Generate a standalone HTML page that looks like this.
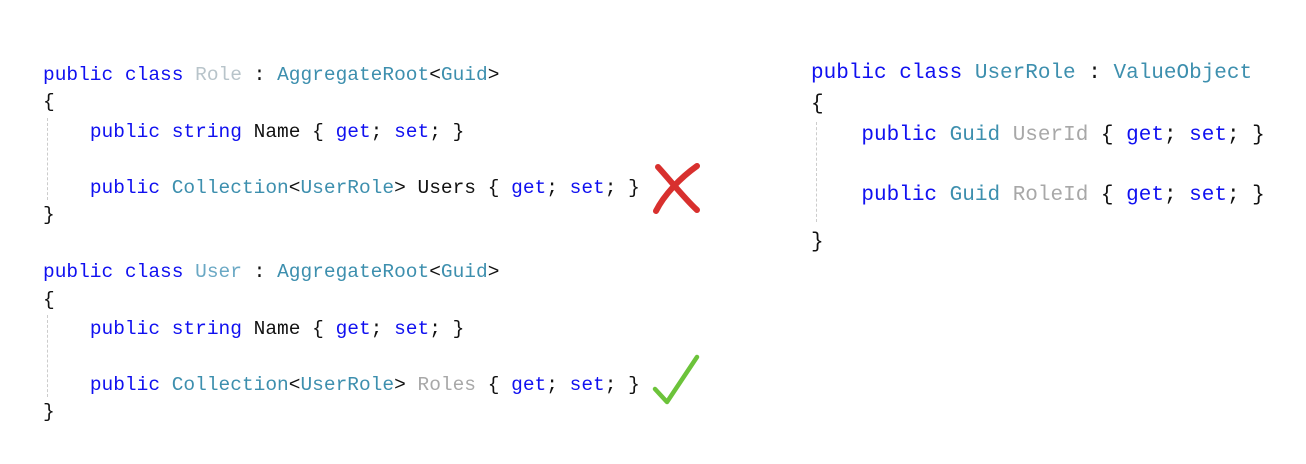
<!DOCTYPE html>
<html><head><meta charset="utf-8"><style>
html,body{margin:0;padding:0;background:#fff;width:1306px;height:464px;overflow:hidden;position:relative}
.l{position:absolute;white-space:pre;font-family:"Liberation Mono",monospace;font-size:19.5px;line-height:24px;color:#111}
.r{font-size:21px}
.k{color:#1010f0}.t{color:#3d8fae}.g{color:#a8a8a8}
.guide{position:absolute;width:0;border-left:1px dashed #ccc}
</style></head><body>
<div class="l" style="left:43px;top:63px"><span class="k">public class</span> <span class="g" style="color:#b8c4ca">Role</span> : <span class="t">AggregateRoot</span>&lt;<span class="t">Guid</span>&gt;</div>
<div class="l" style="left:43px;top:90px">{</div>
<div class="l" style="left:43px;top:120px">    <span class="k">public string</span> Name { <span class="k">get</span>; <span class="k">set</span>; }</div>
<div class="l" style="left:43px;top:176px">    <span class="k">public</span> <span class="t">Collection</span>&lt;<span class="t">UserRole</span>&gt; Users { <span class="k">get</span>; <span class="k">set</span>; }</div>
<div class="l" style="left:43px;top:203px">}</div>
<div class="guide" style="left:47px;top:118px;height:82px"></div>

<div class="l" style="left:43px;top:260px"><span class="k">public class</span> <span class="t" style="color:#6aa8c4">User</span> : <span class="t">AggregateRoot</span>&lt;<span class="t">Guid</span>&gt;</div>
<div class="l" style="left:43px;top:288px">{</div>
<div class="l" style="left:43px;top:317px">    <span class="k">public string</span> Name { <span class="k">get</span>; <span class="k">set</span>; }</div>
<div class="l" style="left:43px;top:373px">    <span class="k">public</span> <span class="t">Collection</span>&lt;<span class="t">UserRole</span>&gt; <span class="g">Roles</span> { <span class="k">get</span>; <span class="k">set</span>; }</div>
<div class="l" style="left:43px;top:400px">}</div>
<div class="guide" style="left:47px;top:315px;height:82px"></div>

<div class="l r" style="left:811px;top:62px"><span class="k">public class</span> <span class="t">UserRole</span> : <span class="t">ValueObject</span></div>
<div class="l r" style="left:811px;top:93px">{</div>
<div class="l r" style="left:811px;top:124px">    <span class="k">public</span> <span class="t">Guid</span> <span class="g">UserId</span> { <span class="k">get</span>; <span class="k">set</span>; }</div>
<div class="l r" style="left:811px;top:184px">    <span class="k">public</span> <span class="t">Guid</span> <span class="g">RoleId</span> { <span class="k">get</span>; <span class="k">set</span>; }</div>
<div class="l r" style="left:811px;top:231px">}</div>
<div class="guide" style="left:816px;top:122px;height:100px"></div>

<svg style="position:absolute;left:0;top:0" width="1306" height="464">
<path d="M658 167 C670 180 684 198 697 210" stroke="#d8302e" stroke-width="6" fill="none" stroke-linecap="round"/>
<path d="M697 166 C680 178 664 195 656 211" stroke="#d8302e" stroke-width="6" fill="none" stroke-linecap="round"/>
<path d="M655 389 L667 402 L697 357" stroke="#6cc33a" stroke-width="4.5" fill="none" stroke-linecap="round" stroke-linejoin="round"/>
</svg>
</body></html>
